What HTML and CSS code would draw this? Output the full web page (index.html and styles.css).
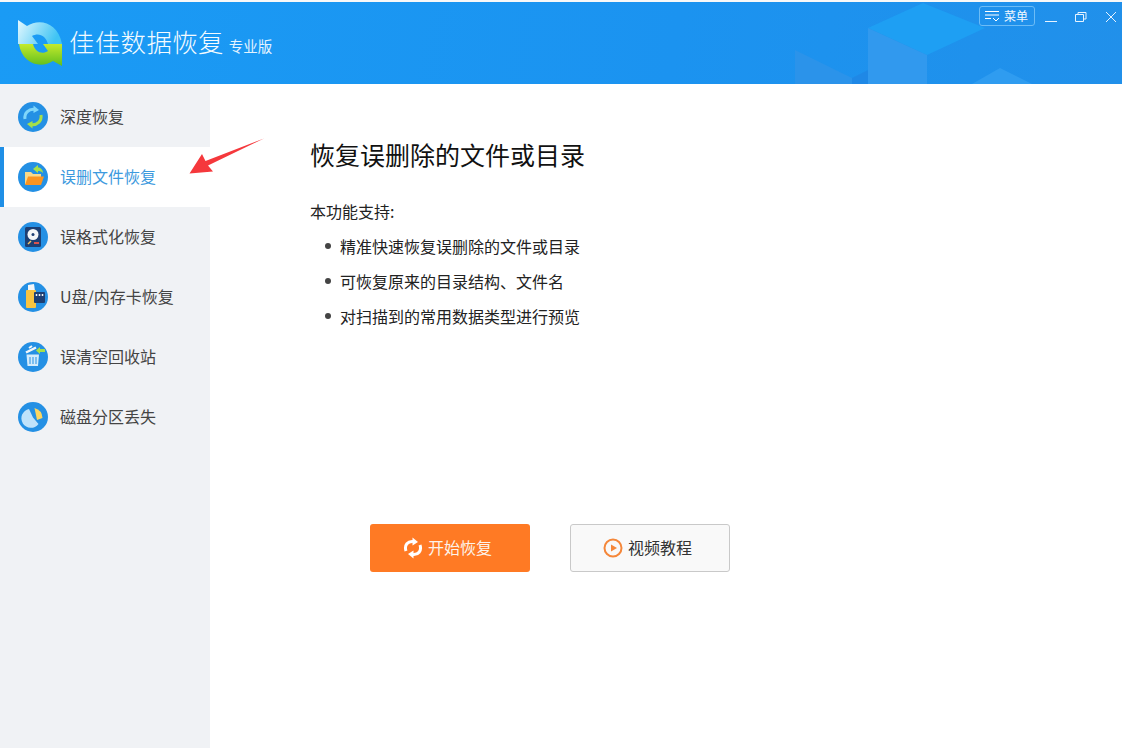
FILE: index.html
```html
<!DOCTYPE html>
<html lang="zh-CN">
<head>
  <meta charset="UTF-8" />
  <title>佳佳数据恢复</title>
  <link rel="stylesheet" href="styles.css">
</head>
<body>
  <div class="top-strip"></div>

  <header>
    <svg class="cubes" width="1122" height="82" viewBox="0 2 1122 82">
      <polygon points="868,28 923,3 985,28 927,55" fill="#1e9ff3" />
      <polygon points="868,28 927,55 927,84 868,84" fill="#3199ee" />
      <polygon points="795,50 852,78 852,84 795,84" fill="#2b93ea" />
      <polygon points="852,78 868,70 868,84 852,84" fill="#1f88e6" />
      <polygon points="972,84 1000,68 1032,84" fill="#2f9cf0" />
    </svg>

    <div class="brand">
      <svg class="logo" width="46" height="48" viewBox="0 0 46 48">
        <defs>
          <linearGradient id="logoTop" x1="0" y1="0" x2="1" y2="0.3">
            <stop offset="0" stop-color="#e4f8fe" />
            <stop offset="1" stop-color="#3fc4f4" />
          </linearGradient>
          <linearGradient id="logoBottom" x1="0" y1="0" x2="0" y2="1">
            <stop offset="0" stop-color="#c4ea2c" />
            <stop offset="1" stop-color="#5fbe1e" />
          </linearGradient>
        </defs>
        <path d="M0 0 L9 6 C21 -2 40 2 44 24 L30 24 C28 16 21 12 14 16 L20 24 L0 24 Z" fill="url(#logoTop)" />
        <path d="M44 46 L35 41 C23 49 4 44 1 24 L15 24 C17 32 24 35 30 31 L25 24 L44 24 Z" fill="url(#logoBottom)" />
      </svg>
      <span class="brand-name">佳佳数据恢复</span>
      <span class="brand-edition">专业版</span>
    </div>

    <div class="window-controls">
      <button class="menu-btn">
        <svg width="17" height="12" viewBox="0 0 17 12">
          <path d="M1 1.500H15M1 5H15M1 8.500H7" stroke="#fff" fill="none" />
          <path d="M9 8L12 11L15 8" stroke="#fff" fill="none" />
        </svg>
        菜单
      </button>
      <svg class="win-icon" width="14" height="14" viewBox="0 0 14 14"><path d="M1 11.500H13" stroke="#e6f3ff" /></svg>
      <svg class="win-icon" width="14" height="14" viewBox="0 0 14 14"><path d="M1.500 4.500H9.500V11.500H1.500ZM4 4V2.500H12V9H10" stroke="#e6f3ff" fill="none" /></svg>
      <svg class="win-icon" width="14" height="14" viewBox="0 0 14 14"><path d="M2 2L12 12M12 2L2 12" stroke="#e6f3ff" fill="none" /></svg>
    </div>
  </header>

  <div class="layout">
    <aside class="sidebar">
      <a class="nav-item" href="#">
        <svg class="nav-icon" viewBox="0 0 30 30">
          <circle cx="15" cy="15" r="15" fill="#2490e4" />
          <path d="M7 17C6 11 11 6.500 17 7.500" stroke="#7fd6fa" stroke-width="3" fill="none" />
          <path d="M15.500 3.500L21 8L15.500 11Z" fill="#7fd6fa" />
          <path d="M23 13C24 19 19 23.500 13 22.500" stroke="#a6e04a" stroke-width="3" fill="none" />
          <path d="M14.500 26.500L9 22L14.500 19Z" fill="#a6e04a" />
        </svg>
        深度恢复
      </a>
      <a class="nav-item active" href="#">
        <svg class="nav-icon" viewBox="0 0 30 30">
          <circle cx="15" cy="15" r="15" fill="#2490e4" />
          <path d="M7 10H13L15 12H23V22H7Z" fill="#f9d98a" />
          <path d="M10 14.500H26L23 23H7Z" fill="#fb9420" />
          <path d="M15 7L20 3V5.500C23 5.500 25 8 25 11C23.500 9.500 22 9 20 9V11Z" fill="#a6e04a" />
        </svg>
        误删文件恢复
      </a>
      <a class="nav-item" href="#">
        <svg class="nav-icon" viewBox="0 0 30 30">
          <circle cx="15" cy="15" r="15" fill="#2490e4" />
          <rect x="7" y="5" width="16" height="20" rx="1.500" fill="#1d3f73" />
          <circle cx="15" cy="12.500" r="5.500" fill="#f3f6f8" />
          <circle cx="15" cy="12.500" r="1.500" fill="#1d3f73" />
          <rect x="16" y="20" width="5" height="2" fill="#d9534f" />
          <path d="M10 22L13 19" stroke="#f6c667" stroke-width="1.500" />
        </svg>
        误格式化恢复
      </a>
      <a class="nav-item" href="#">
        <svg class="nav-icon" viewBox="0 0 30 30">
          <circle cx="15" cy="15" r="15" fill="#2490e4" />
          <path d="M10 3L16 2L17 9H10Z" fill="#f3f6f8" />
          <rect x="8" y="8" width="10" height="18" rx="1" fill="#f9c440" />
          <rect x="16" y="10" width="11" height="11" rx="1" fill="#1d3f73" />
          <path d="M18.500 12V14M21.500 12V14M24.500 12V14" stroke="#f3f6f8" stroke-width="1.500" />
        </svg>
        U盘/内存卡恢复
      </a>
      <a class="nav-item" href="#">
        <svg class="nav-icon" viewBox="0 0 30 30">
          <circle cx="15" cy="15" r="15" fill="#2490e4" />
          <path d="M8.500 12.500H21L20 24H9.500Z" fill="#d4ecfb" />
          <path d="M12 15V22M15 15V22M18 15V22" stroke="#2490e4" />
          <path d="M8 10.500L18 5.500" stroke="#f3f6f8" stroke-width="2.500" />
          <path d="M11 6L14 4" stroke="#f3f6f8" stroke-width="2" />
          <path d="M18 8.500L22 5V7H27V10H22V12Z" fill="#a6e04a" />
        </svg>
        误清空回收站
      </a>
      <a class="nav-item" href="#">
        <svg class="nav-icon" viewBox="0 0 30 30">
          <circle cx="15" cy="15" r="15" fill="#2490e4" />
          <path d="M11 7L15 15.500L20.500 22A9.500 9.500 0 1 1 11 7Z" fill="#bfe2fa" />
          <path d="M16.500 6A11 11 0 0 1 24.500 16L19 18Z" fill="#fbd660" />
        </svg>
        磁盘分区丢失
      </a>
    </aside>

    <main class="content">
      <h1>恢复误删除的文件或目录</h1>
      <p class="support">本功能支持:</p>
      <ul class="features">
        <li>精准快速恢复误删除的文件或目录</li>
        <li>可恢复原来的目录结构、文件名</li>
        <li>对扫描到的常用数据类型进行预览</li>
      </ul>
      <div class="actions">
        <button class="btn btn-start">
          <svg width="20" height="22" viewBox="0 0 20 22">
            <path d="M3 14C1 8 5 4 10 4.500" stroke="#fff" stroke-width="3" fill="none" />
            <path d="M9.500 0.500L15 5L9.500 8.500Z" fill="#fff" />
            <path d="M17 8C19 14 15 18 10 17.500" stroke="#fff" stroke-width="3" fill="none" />
            <path d="M10.500 21.500L5 17L10.500 13.500Z" fill="#fff" />
          </svg>
          开始恢复
        </button>
        <button class="btn btn-video">
          <svg width="20" height="20" viewBox="0 0 20 20">
            <circle cx="10" cy="10" r="8.500" stroke="#f5873a" stroke-width="2" fill="none" />
            <path d="M8 6.500L14 10L8 13.500Z" fill="#f5873a" />
          </svg>
          视频教程
        </button>
      </div>
    </main>
  </div>

  <!-- red annotation arrow drawn over the screenshot -->
  <svg class="annotation" width="76" height="38" viewBox="0 0 76 38">
    <path d="M75 0.500L19 27.500L24 33.500L0.500 35.500L13 16L16.500 23Z" fill="#f5383c" />
  </svg>
</body>
</html>
```

FILE: styles.css
```css
* {
  box-sizing: border-box;
}
html, body {
  height: 100%;
}
body {
  margin: 0;
  background-color: #fff;
  color: #333;
  font-family: "Noto Sans CJK SC", "Liberation Sans", sans-serif;
  overflow: hidden;
}
.top-strip {
  height: 2px;
  background-color: #f8f8f8;
}
header {
  position: relative;
  height: 82px;
  display: flex;
  justify-content: space-between;
  background: linear-gradient(100deg, #1a9bf5 0%, #1b93f0 60%, #2190ea 100%);
  overflow: hidden;
}
.cubes {
  position: absolute;
  left: 0;
  top: 0;
}
.brand {
  position: relative;
  display: flex;
  align-items: center;
  padding-left: 18px;
  padding-bottom: 5px;
  color: #fff;
}
.logo {
  margin-top: 6px;
}
.brand-name {
  margin-left: 5px;
  font-size: 25.5px;
  font-weight: 300;
  letter-spacing: 0.3px;
  color: #f4fbff;
}
.brand-edition {
  margin-left: 5px;
  margin-top: 10px;
  font-size: 14.5px;
  color: #e3f3ff;
}
.window-controls {
  position: relative;
  display: flex;
  align-items: flex-start;
  gap: 16px;
  padding: 4px 4px 0 0;
}
.menu-btn {
  display: flex;
  align-items: center;
  gap: 3px;
  width: 56px;
  height: 20px;
  margin-right: -7px;
  padding: 0 0 0 4px;
  border: 1px solid #6cbcf6;
  border-radius: 3px;
  background: transparent;
  color: #f0f8ff;
  font-family: inherit;
  font-size: 12px;
  line-height: 1;
}
.win-icon {
  margin-top: 4px;
}
.layout {
  display: flex;
  height: 664px;
}
.sidebar {
  width: 210px;
  padding-top: 3px;
  background-color: #f0f2f5;
}
.nav-item {
  display: flex;
  align-items: center;
  gap: 12px;
  height: 60px;
  padding: 0 0 2px 18px;
  color: #444;
  font-size: 16px;
  text-decoration: none;
}
.nav-item.active {
  background-color: #fff;
  border-left: 4px solid #1f8fe6;
  padding-left: 14px;
  color: #3d9ade;
}
.nav-icon {
  width: 30px;
  height: 30px;
  margin-top: 2px;
  flex: none;
}
.content {
  flex: 1;
  padding: 52px 0 0 100px;
}
h1 {
  margin: 0;
  font-size: 25px;
  font-weight: 400;
  line-height: 36px;
  color: #111;
}
.support {
  margin: 22px 0 0;
  font-size: 16px;
  line-height: 35px;
  color: #222;
}
.features {
  margin: 0;
  padding: 0 0 0 30px;
  list-style: none;
  font-size: 16px;
  line-height: 35px;
  color: #222;
}
.features li {
  position: relative;
}
.features li::before {
  content: "";
  position: absolute;
  left: -15px;
  top: 14px;
  width: 6px;
  height: 6px;
  border-radius: 50%;
  background-color: #444;
}
.actions {
  display: flex;
  gap: 40px;
  margin: 190px 0 0 60px;
}
.btn {
  display: flex;
  align-items: center;
  justify-content: center;
  gap: 5px;
  width: 160px;
  height: 48px;
  padding: 0 5px 2px 0;
  border-radius: 3px;
  font-family: inherit;
  font-size: 16px;
}
.btn svg {
  margin-top: 2px;
}
.btn-start {
  border: none;
  background-color: #ff7a24;
  color: #fdf3ea;
}
.btn-video {
  border: 1px solid #c9c9c9;
  background-color: #f9f9f9;
  color: #333;
}
.annotation {
  position: absolute;
  left: 189px;
  top: 138px;
}
```
